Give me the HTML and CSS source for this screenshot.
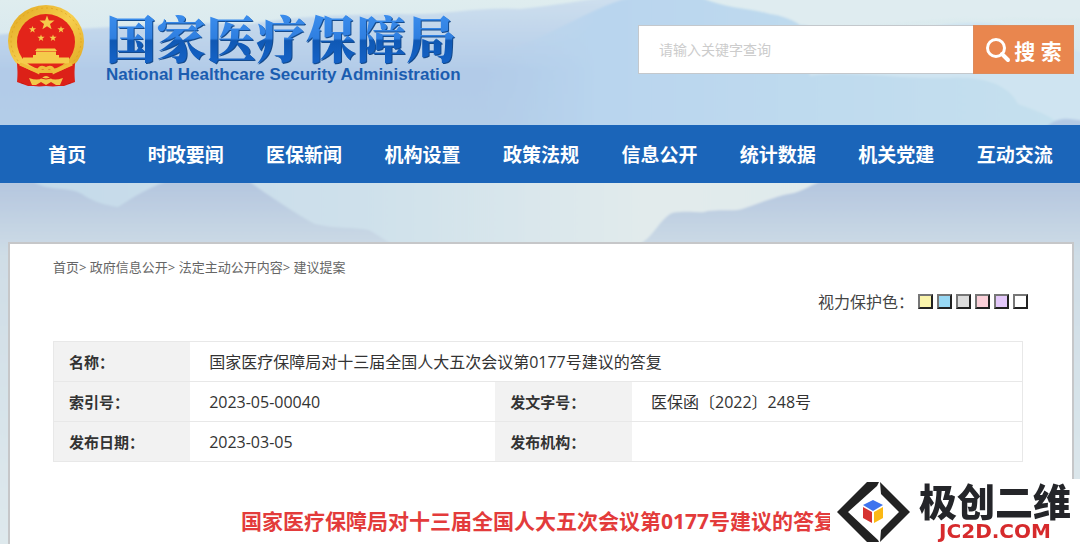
FILE: index.html
```html
<!DOCTYPE html>
<html lang="zh-CN">
<head>
<meta charset="utf-8">
<meta name="viewport" content="width=device-width, initial-scale=1">
<title>国家医疗保障局</title>
<link rel="stylesheet" href="styles.css">
</head>
<body>
<svg class="scene" viewBox="0 0 1080 544" preserveAspectRatio="none" aria-hidden="true">
  <defs>
    <linearGradient id="sky" x1="0" y1="0" x2="0" y2="1"><stop offset="0" stop-color="#dfedef"/><stop offset=".35" stop-color="#c4dbec"/><stop offset="1" stop-color="#e6eef1"/></linearGradient>
    <linearGradient id="far" x1="0" y1="0" x2="0" y2="1"><stop offset="0" stop-color="#cfe0ee"/><stop offset=".4" stop-color="#b2cbe8"/><stop offset="1" stop-color="#b5cfe8"/></linearGradient>
    <linearGradient id="mid" x1="0" y1="0" x2="1" y2="0"><stop offset="0" stop-color="#b6d2ec" stop-opacity="0"/><stop offset=".2" stop-color="#b9d5ee"/><stop offset="1" stop-color="#c6e1ee"/></linearGradient>
    <linearGradient id="near" x1="0" y1="0" x2="0" y2="1"><stop offset="0" stop-color="#b4c6df"/><stop offset=".2" stop-color="#cfdde6"/><stop offset="1" stop-color="#dfe9ed"/></linearGradient>
    <linearGradient id="dawn" x1="0" y1="0" x2="1" y2="0"><stop offset="0" stop-color="#c3d9e9"/><stop offset=".35" stop-color="#cfe1eb"/><stop offset=".6" stop-color="#e2ebec"/><stop offset="1" stop-color="#dde9ed"/></linearGradient>
    <filter id="soft"><feGaussianBlur stdDeviation="1"/></filter>
  </defs>
  <rect width="1080" height="544" fill="url(#sky)"/>
  <g filter="url(#soft)">
    <path fill="url(#far)" d="M-5 35C30 31 60 30 95 28C160 24 210 22 250 24C310 14 360 15 400 14C440 16 480 6 520 9C570 4 600-4 640-5H690L800 60V185H-5Z"/>
    <path fill="url(#mid)" d="M480 60C560 35 600 0 640-4L700-3C725 9 750 8 770 14C790 16 800 25 830 34C890 55 1000 60 1085 85V185H480Z"/>
    <path fill="#cfe4f1" d="M810 76C850 70 900 80 950 78C990 76 1010 88 1018 104C1035 110 1050 115 1060 125H1085V55C1020 20 980 20 940 25C900 40 850 30 800 26Z"/>
    <path fill="#dfecf0" d="M702-3C740 8 785 13 800 25C880 30 940 14 990 19C1020 15 1050 20 1085 18V-5Z"/>
    <path fill="#b3c9e4" d="M1045 128C1060 114 1072 120 1085 121V140H1040Z"/>
    <rect x="-5" y="180" width="1090" height="370" fill="url(#dawn)"/>
    <path fill="url(#near)" d="M-5 182H34C50 192 68 186 82 194C96 204 112 206 118 207C135 196 148 188 165 182H250C275 200 303 218 315 224C335 229 355 227 369 230C385 239 405 254 420 265V550H-5Z"/>
    <path fill="url(#near)" d="M640 244C654 236 660 219 672 213C690 210 700 214 708 211C725 209 735 212 745 208C765 201 780 195 794 193C805 190 812 184 820 182H1085V550H640Z"/>
  </g>
</svg>

<header class="header">
  <a class="brand" href="#">
    <svg class="emblem" viewBox="0 0 76 84" aria-hidden="true">
      <defs><linearGradient id="gold" x1="0" y1="0" x2="1" y2="1"><stop offset="0" stop-color="#dfa51e"/><stop offset=".5" stop-color="#f7cf4e"/><stop offset="1" stop-color="#dda11c"/></linearGradient>
      <path id="star" d="M0-6L1.500-2L6-2L2.400.8L3.700 5L0 2.500L-3.700 5L-2.400.8L-6-2L-1.500-2Z"/></defs>
      <path fill="#d81f16" d="M11 56L9 77L20 81H56L67 77L65 56Z"/>
      <path fill="#a91510" d="M15 65l-2 13 3 1 1-13zM61 65l2 13-3 1-1-13z"/>
      <ellipse cx="38" cy="36" rx="38" ry="36" fill="url(#gold)"/>
      <ellipse cx="38" cy="36" rx="35" ry="33" fill="none" stroke="#d59b1c" stroke-width=".6" stroke-dasharray="2 3"/>
      <ellipse cx="38" cy="37" rx="29" ry="28" fill="#e3241a"/>
      <path d="M9 58Q23 67 32 68H44Q53 67 67 58L66 76Q54 83 38 81Q22 83 10 76Z" fill="#dc2118"/>
      <g fill="#f5cb4b"><use href="#star" transform="translate(39 18) scale(1.250)"/><use href="#star" transform="translate(24.500 24.500) scale(.6)"/><use href="#star" transform="translate(53 24.500) scale(.6)"/><use href="#star" transform="translate(33 33) scale(.6)"/><use href="#star" transform="translate(45 33) scale(.6)"/>
      <path d="M29 43.500H47L49 46H27ZM28 46.500H48V50H51V52.500H61V58.500H15V52.500H25V50H28Z"/></g>
      <path d="M12 59Q22 63 30 67Q32 60 38 64Q44 60 46 67Q54 63 64 59" fill="none" stroke="#f0bd3a" stroke-width="3.500"/>
      <path fill="#f2c849" d="M21 73Q30 76 34 73Q38 69 42 73Q46 76 55 73L52 80H48L43 77L38 80L33 77L28 80H24Z"/>
      <path d="M30 71Q38 77 46 71" fill="none" stroke="#d81f16"/>
    </svg>
    <span class="brand-text"><span class="brand-cn">国家医疗保障局</span><span class="brand-en">National Healthcare Security Administration</span></span>
  </a>
  <form class="search">
    <input class="search-input" type="text" aria-label="关键字" placeholder="请输入关键字查询">
    <button class="search-button" type="button">
      <svg class="search-icon" viewBox="0 0 26 26" aria-hidden="true"><circle cx="11" cy="11" r="8.500" fill="none" stroke="#fff" stroke-width="3"/><path d="M17 17L23 23" stroke="#fff" stroke-width="4" stroke-linecap="round"/></svg>搜 索</button>
  </form>
</header>

<nav class="nav">
  <a href="#">首页</a><a href="#">时政要闻</a><a href="#">医保新闻</a><a href="#">机构设置</a><a href="#">政策法规</a><a href="#">信息公开</a><a href="#">统计数据</a><a href="#">机关党建</a><a href="#">互动交流</a>
</nav>

<main class="panel">
  <div class="crumbs"><a href="#">首页</a>&gt; <a href="#">政府信息公开</a>&gt; <a href="#">法定主动公开内容</a>&gt; <a href="#">建议提案</a></div>
  <div class="eyecare">
    <span class="eyecare-label">视力保护色：</span>
    <button class="swatch yellow" type="button" aria-label="黄色"></button>
    <button class="swatch blue" type="button" aria-label="蓝色"></button>
    <button class="swatch gray" type="button" aria-label="灰色"></button>
    <button class="swatch pink" type="button" aria-label="粉色"></button>
    <button class="swatch purple" type="button" aria-label="紫色"></button>
    <button class="swatch white" type="button" aria-label="白色"></button>
  </div>
  <table class="info">
    <colgroup><col class="col-label"><col class="col-value"><col class="col-label"><col></colgroup>
    <tr><th scope="row">名称：</th><td colspan="3">国家医疗保障局对十三届全国人大五次会议第0177号建议的答复</td></tr>
    <tr><th scope="row">索引号：</th><td>2023-05-00040</td><th scope="row">发文字号：</th><td>医保函〔2022〕248号</td></tr>
    <tr><th scope="row">发布日期：</th><td>2023-03-05</td><th scope="row">发布机构：</th><td></td></tr>
  </table>
  <h1 class="title">国家医疗保障局对十三届全国人大五次会议第0177号建议的答复</h1>
</main>

<aside class="mark">
  <svg class="mark-icon" viewBox="0 0 74 62" aria-hidden="true">
    <path fill="#222" d="M31 1H43L41 5L12 31L42 59L43 61H31L1 31Z"/>
    <path fill="#222" d="M44 1L74 31L44 61L45 49L63 31L45 13Z"/>
    <path fill="#3e74ee" d="M37 19L47 24L37 30L27 24Z"/>
    <path fill="#d63230" d="M27 26L36 31V42L27 37Z"/>
    <path fill="#fbb814" d="M38 31L47 26V37L38 42Z"/>
  </svg>
  <div class="mark-text"><span class="mark-cn">极创二维</span><span class="mark-en">JC2D.COM</span></div>
</aside>
</body>
</html>
```
FILE: styles.css
```css
* { box-sizing: border-box; }
html, body { height: 100%; }
body {
  margin: 0;
  display: flex;
  flex-direction: column;
  overflow: hidden;
  color: #333;
  font-family: "Open Sans", "Noto Sans CJK SC", sans-serif;
  font-size: 16px;
}
a { color: inherit; text-decoration: none; }
button, input { font-family: inherit; }

.scene {
  position: absolute;
  inset: 0;
  width: 100%;
  height: 100%;
  z-index: -1;
}

.header {
  flex: none;
  height: 125px;
  padding: 5px 6px 0 8px;
  display: flex;
  justify-content: space-between;
  align-items: flex-start;
}
.brand { display: flex; gap: 22px; }
.emblem { width: 76px; height: 84px; }
.brand-text { display: flex; flex-direction: column; padding-top: 2px; }
.brand-cn {
  font-size: 50px;
  line-height: 58px;
  font-family: "Noto Serif CJK SC", "Noto Sans CJK SC", serif;
  font-weight: 900;
  color: transparent;
  background: linear-gradient(#3a8cec 15%, #2f7fe0 54%, #0f58b4 58%, #1461c4 90%);
  -webkit-background-clip: text;
  background-clip: text;
  filter: drop-shadow(1px 1px 0 #154b8d);
}
.brand-en {
  font: bold 17px/20px "Liberation Sans", Arial, sans-serif;
  color: #1b5db0;
}

.search { display: flex; width: 436px; height: 49px; margin-top: 20px; }
.search-input {
  flex: 1;
  min-width: 0;
  padding: 0 20px;
  border: 1px solid #c4c8cc;
  border-right: 0;
  border-radius: 0;
  background: #fff;
  font-size: 14px;
}
.search-input::placeholder { color: #ccc; opacity: 1; }
.search-button {
  width: 101px;
  padding: 0;
  display: flex;
  align-items: center;
  justify-content: center;
  gap: 3px;
  border: 1px solid #dc8b5c;
  background: #e9864e;
  color: #fff;
  font-size: 21px;
  font-weight: 700;
}
.search-icon { width: 26px; height: 26px; }

.nav {
  flex: none;
  display: flex;
  height: 58px;
  padding: 0 6px 0 8px;
  background: #1b65b9;
}
.nav a {
  flex: 1;
  text-align: center;
  color: #fff;
  font-size: 19px;
  font-weight: 700;
  line-height: 60px;
  white-space: nowrap;
}

.panel {
  flex: 1 0 auto;
  margin: 59px 6px 0 8px;
  padding: 13px 49px 0 43px;
  border: 2px solid #c6c7c9;
  border-bottom: 0;
  background: #fff;
}
.crumbs { font-size: 13px; line-height: 20px; color: #666; }
.eyecare {
  display: flex;
  justify-content: flex-end;
  align-items: center;
  gap: 4px;
  height: 24px;
  margin-top: 12px;
  margin-right: -5px;
}
.eyecare-label { color: #444; }
.swatch {
  width: 15px;
  height: 15px;
  padding: 0;
  border: 2px solid;
  border-color: #777 #222 #222 #777;
}
.yellow { background: #faf4ab; }
.blue { background: #98d8f4; }
.gray { background: #ddd; }
.pink { background: #fbd0d9; }
.purple { background: #e3c8fa; }
.white { background: #fff; }

.info {
  width: 100%;
  margin-top: 28px;
  table-layout: fixed;
  border-collapse: collapse;
  border: 1px solid #e8e8e8;
}
.col-label { width: 14.1%; }
.col-value { width: 31.5%; }
.info tr { height: 40px; border-bottom: 1px solid #e8e8e8; }
.info th {
  padding: 0 0 0 15px;
  background: #f2f2f2;
  text-align: left;
  font-size: 15px;
  line-height: 24px;
}
.info td { padding: 0 0 0 19px; line-height: 24px; }

.title {
  margin: 43px 0 0;
  text-align: center;
  font-size: 21px;
  line-height: 32px;
  color: #e33b3b;
  white-space: nowrap;
}

.mark {
  position: fixed;
  right: 0;
  bottom: 0;
  display: flex;
  gap: 9px;
  width: 250px;
  height: 65px;
  padding: 2px 6px 0;
  background: #fff;
}
.mark-icon { width: 74px; height: 62px; flex: none; }
.mark-text { display: flex; flex-direction: column; align-items: center; }
.mark-cn { font-size: 38px; line-height: 40px; font-weight: 900; color: #242529; white-space: nowrap; }
.mark-en { font: bold 20px/20px "DejaVu Sans", sans-serif; color: #d62a2c; }
```
